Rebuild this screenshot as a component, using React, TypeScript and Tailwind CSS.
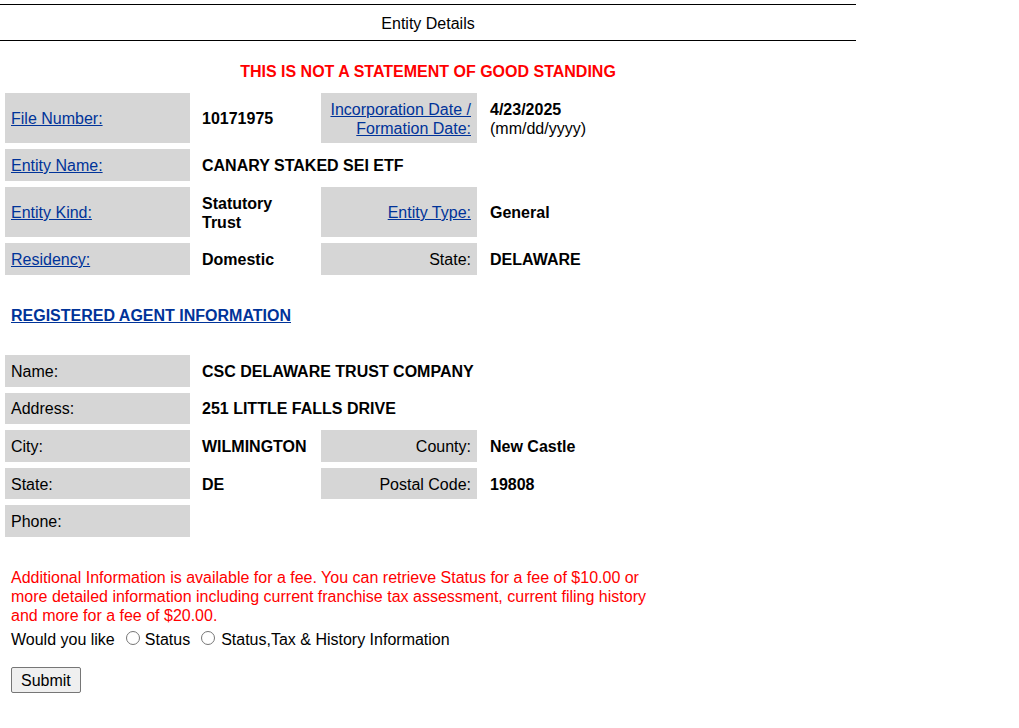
import React from "react";

const LINK = "text-[#003399] underline";

function Label({ children, right, link = true }: { children: React.ReactNode; right?: boolean; link?: boolean }) {
  return (
    <div className={`bg-[#d6d6d6] px-[6px] pt-[1px] flex items-center ${right ? "justify-end text-right" : ""}`}>
      <span className={link ? LINK : "text-black"}>{children}</span>
    </div>
  );
}

function Value({ children, span, pl }: { children?: React.ReactNode; span?: boolean; pl?: boolean }) {
  return (
    <div
      className={`${pl ? "pl-[7px]" : "pl-[6px]"} pr-[6px] pt-[1px] flex items-center font-bold text-black ${
        span ? "col-span-3" : ""
      }`}
    >
      <div>{children}</div>
    </div>
  );
}

export default function App() {
  return (
    <div
      className="bg-white min-h-[728px] text-[16px] leading-[19px] text-black"
      style={{ fontFamily: '"Liberation Sans", Arial, sans-serif' }}
    >
      <div className="w-[856px]">
        <div className="mt-[4px] h-[37px] pt-[1px] border-t border-b border-black flex items-center justify-center">
          Entity Details
        </div>

        <div className="mt-[20.5px] text-center font-bold text-[#ff0000]">THIS IS NOT A STATEMENT OF GOOD STANDING</div>
      </div>

      <div className="ml-[5px] mt-[12.5px] grid grid-cols-[185px_119px_156px_auto] grid-rows-[50px_32px_50px_32px] gap-[6px] w-[660px]">
        <Label>File Number:</Label>
        <Value>10171975</Value>
        <Label right>
          Incorporation Date /<br />
          Formation Date:
        </Label>
        <div className="pl-[7px] pr-[6px] pt-[1px] flex items-center text-black">
          <div>
            <span className="font-bold">4/23/2025</span>
            <br />
            (mm/dd/yyyy)
          </div>
        </div>

        <Label>Entity Name:</Label>
        <Value span>CANARY STAKED SEI ETF</Value>

        <Label>Entity Kind:</Label>
        <Value>
          Statutory
          <br />
          Trust
        </Value>
        <Label right>Entity Type:</Label>
        <Value pl>General</Value>

        <Label>Residency:</Label>
        <Value>Domestic</Value>
        <Label right link={false}>
          State:
        </Label>
        <Value pl>DELAWARE</Value>
      </div>

      <div className="ml-[11px] mt-[30.5px] font-bold">
        <span className={LINK}>REGISTERED AGENT INFORMATION</span>
      </div>

      <div className="ml-[5px] mt-[30.5px] grid grid-cols-[185px_119px_156px_auto] auto-rows-[31.6px] gap-[6px] w-[660px]">
        <Label link={false}>Name:</Label>
        <Value span>CSC DELAWARE TRUST COMPANY</Value>

        <Label link={false}>Address:</Label>
        <Value span>251 LITTLE FALLS DRIVE</Value>

        <Label link={false}>City:</Label>
        <Value>WILMINGTON</Value>
        <Label right link={false}>
          County:
        </Label>
        <Value pl>New Castle</Value>

        <Label link={false}>State:</Label>
        <Value>DE</Value>
        <Label right link={false}>
          Postal Code:
        </Label>
        <Value pl>19808</Value>

        <Label link={false}>Phone:</Label>
        <Value span></Value>
      </div>

      <div className="ml-[11px] mt-[31px] w-[650px] text-[#ff0000]">
        Additional Information is available for a fee. You can retrieve Status for a fee of $10.00 or more detailed
        information including current franchise tax assessment, current filing history and more for a fee of $20.00.
      </div>

      <div className="ml-[11px] mt-[5px] flex items-start h-[19px]">
        <span>Would you like</span>
        <input
          type="radio"
          name="opt"
          className="appearance-none ml-[11px] mr-[5px] mt-[1px] w-[14px] h-[14px] rounded-full border border-[#767676] bg-white shrink-0"
        />
        <span>Status</span>
        <input
          type="radio"
          name="opt"
          className="appearance-none ml-[11px] mr-[6px] mt-[1px] w-[14px] h-[14px] rounded-full border border-[#767676] bg-white shrink-0"
        />
        <span>Status,Tax &amp; History Information</span>
      </div>

      <div className="ml-[11px] mt-[18.5px]">
        <button className="h-[26px] px-[9px] border border-[#767676] rounded-[2px] bg-[#efefef] text-black leading-[19px]">
          Submit
        </button>
      </div>
    </div>
  );
}
